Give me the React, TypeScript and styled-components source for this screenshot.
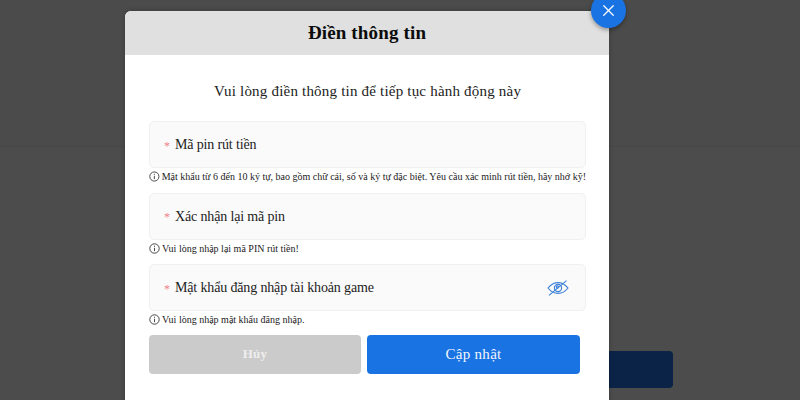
import React from 'react';
import styled, { createGlobalStyle } from 'styled-components';
import { X } from 'lucide-react';

const GlobalStyle = createGlobalStyle`
  html, body {
    margin: 0;
    padding: 0;
    height: 100%;
    overflow: hidden;
    background: #4c4c4c;
    font-family: "Liberation Serif", "Times New Roman", serif;
  }
`;

const Page = styled.div`
  position: relative;
  width: 800px;
  height: 400px;
  overflow: hidden;
  display: flex;
  flex-direction: column;
  background: #4c4c4c;
`;

const PageTop = styled.div`
  height: 146px;
  flex-shrink: 0;
  background: #4b4b4b;
  border-bottom: 1px solid #474747;
`;

const PageBody = styled.div`
  flex: 1;
  display: flex;
  justify-content: flex-end;
  padding: 204px 127px 0 0;
`;

const PageButton = styled.div`
  width: 300px;
  height: 37px;
  border-radius: 4px;
  background: #0a2347;
`;

const Modal = styled.div`
  position: absolute;
  top: 11px;
  left: 125px;
  width: 484px;
  height: 400px;
  background: #fff;
  border-radius: 6px 6px 0 0;
  box-shadow: 0 0 5px rgba(0, 0, 0, 0.25);
  display: flex;
  flex-direction: column;
`;

const ModalHeader = styled.header`
  height: 44px;
  flex-shrink: 0;
  display: flex;
  align-items: center;
  justify-content: center;
  background: #e0e0e0;
  border-radius: 6px 6px 0 0;
`;

const ModalTitle = styled.h2`
  margin: 0;
  font-size: 19px;
  font-weight: 700;
  letter-spacing: 0.15px;
  color: #0c0c0c;
`;

const CloseButton = styled.button`
  position: absolute;
  top: -18px;
  right: -17px;
  width: 35px;
  height: 35px;
  padding: 0;
  border: none;
  border-radius: 50%;
  background: #1a73e3;
  color: #fff;
  display: flex;
  align-items: center;
  justify-content: center;
  box-shadow: 0 2px 4px rgba(0, 0, 0, 0.35);
`;

const ModalBody = styled.div`
  display: flex;
  flex-direction: column;
  padding: 0 23px 0 24px;
`;

const Subtitle = styled.p`
  margin: 0;
  height: 66px;
  display: flex;
  align-items: center;
  justify-content: center;
  padding-top: 6px;
  box-sizing: border-box;
  font-size: 15px;
  letter-spacing: 0.2px;
  color: #222;
`;

const Field = styled.div`
  height: 47px;
  box-sizing: border-box;
  display: flex;
  align-items: center;
  padding: 0 16px 0 14px;
  background: #fafafa;
  border: 1px solid #f0f0f0;
  border-radius: 5px;
`;

const Required = styled.span`
  width: 11px;
  flex-shrink: 0;
  padding-top: 3px;
  font-size: 12px;
  color: #f0808a;
`;

const Label = styled.span`
  flex: 1;
  padding-top: 1px;
  font-size: 14px;
  letter-spacing: -0.15px;
  color: #222;
`;

const Hint = styled.div`
  height: 24.5px;
  display: flex;
  align-items: center;
  gap: 2px;
  padding-bottom: 7px;
  box-sizing: border-box;
  font-size: 10px;
  color: #222;
  white-space: nowrap;
`;

const Actions = styled.div`
  display: grid;
  grid-template-columns: 212px 1fr;
  gap: 6px;
  width: 431px;
  margin-top: -1px;
`;

const ActionButton = styled.button<{ $primary?: boolean }>`
  height: 39px;
  padding: 0;
  border: none;
  border-radius: 4px;
  font-family: inherit;
  font-size: ${(p) => (p.$primary ? '15px' : '13px')};
  font-weight: ${(p) => (p.$primary ? 400 : 700)};
  letter-spacing: 0.3px;
  color: ${(p) => (p.$primary ? '#f2f6fd' : '#eeeeee')};
  background: ${(p) => (p.$primary ? '#1a73e3' : '#cbcbcb')};
`;

const InfoIcon = () => (
  <svg width="11" height="11" viewBox="0 0 11 11" fill="none" stroke="#333" strokeWidth="0.9">
    <circle cx="5.5" cy="5.5" r="4.7" />
    <path d="M5.5 4.8V8.2M5.5 2.7V3.8" />
  </svg>
);

const EyeOffIcon = () => (
  <svg width="22" height="16" viewBox="0 0 22 16" fill="none" stroke="#3f83d8" strokeWidth="1.2">
    <path d="M1 8C4 4.2 7.2 2.6 11 2.6S18 4.2 21 8C18 11.8 14.8 13.4 11 13.4S4 11.8 1 8Z" />
    <circle cx="11" cy="8" r="3.6" />
    <circle cx="10.4" cy="7" r="1.1" />
    <path d="M2 15.4 19.5 0.6" />
  </svg>
);

const fields = [
  {
    label: 'Mã pin rút tiền',
    hint: 'Mật khẩu từ 6 đến 10 ký tự, bao gồm chữ cái, số và ký tự đặc biệt. Yêu cầu xác minh rút tiền, hãy nhớ kỹ!',
  },
  { label: 'Xác nhận lại mã pin', hint: 'Vui lòng nhập lại mã PIN rút tiền!' },
  { label: 'Mật khẩu đăng nhập tài khoản game', hint: 'Vui lòng nhập mật khẩu đăng nhập.', icon: true },
];

const App = () => {
  return (
    <>
      <GlobalStyle />
      <Page>
        <PageTop />
        <PageBody>
          <PageButton />
        </PageBody>
        <Modal>
          <ModalHeader>
            <ModalTitle>Điền thông tin</ModalTitle>
          </ModalHeader>
          <CloseButton aria-label="Đóng">
            <X size={19} strokeWidth={1.6} />
          </CloseButton>
          <ModalBody>
            <Subtitle>Vui lòng điền thông tin để tiếp tục hành động này</Subtitle>
            {fields.map((f) => (
              <React.Fragment key={f.label}>
                <Field>
                  <Required>*</Required>
                  <Label>{f.label}</Label>
                  {f.icon && <EyeOffIcon />}
                </Field>
                <Hint>
                  <InfoIcon />
                  {f.hint}
                </Hint>
              </React.Fragment>
            ))}
            <Actions>
              <ActionButton>Hủy</ActionButton>
              <ActionButton $primary>Cập nhật</ActionButton>
            </Actions>
          </ModalBody>
        </Modal>
      </Page>
    </>
  );
};

export default App;
